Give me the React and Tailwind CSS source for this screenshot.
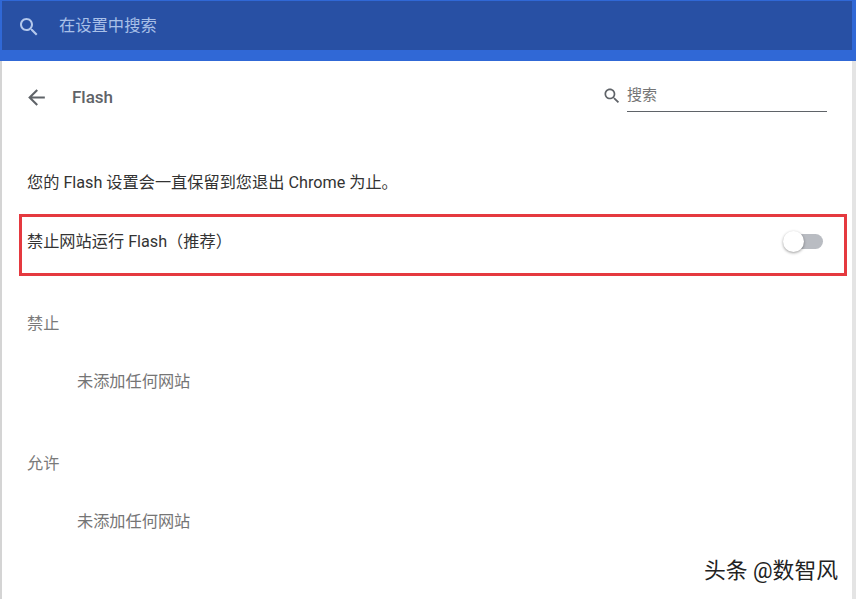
import React from "react";

const font = { fontFamily: '"Roboto", "Noto Sans CJK SC", sans-serif' };

const SearchIcon = ({ className }) => (
  <svg viewBox="0 0 24 24" fill="currentColor" className={className}>
    <path d="M15.5 14h-.79l-.28-.27C15.41 12.59 16 11.11 16 9.5 16 5.91 13.09 3 9.5 3S3 5.91 3 9.5 5.91 16 9.5 16c1.61 0 3.09-.59 4.23-1.57l.27.28v.79l5 4.99L20.49 19l-4.99-5zm-6 0C7.01 14 5 11.99 5 9.5S7.01 5 9.5 5 14 7.01 14 9.5 11.99 14 9.5 14z" />
  </svg>
);

const BackIcon = ({ className }) => (
  <svg viewBox="0 0 24 24" fill="currentColor" className={className}>
    <path d="M20 11H7.83l5.59-5.59L12 4l-8 8 8 8 1.41-1.41L7.83 13H20v-2z" />
  </svg>
);

const EmptySection = ({ title }) => (
  <div>
    <div className="pl-[27px] pt-[2px] h-[28px] flex items-center text-[16.2px] text-[#7a7a7a]">{title}</div>
    <div className="pl-[77px] pt-[2px] mt-[30px] h-[28px] flex items-center text-[16.2px] text-[#757575]">未添加任何网站</div>
  </div>
);

const App = () => {
  return (
    <div className="w-[856px] h-[599px] overflow-hidden bg-white flex flex-col" style={font}>
      <header className="h-[61px] shrink-0 bg-[#3068d6] pl-[2px] pr-[4px] pt-[1px]">
        <div className="h-[49px] pt-[2px] bg-[#2850a4] flex items-center">
          <SearchIcon className="ml-[15px] w-[24px] h-[24px] text-[#b4c8ec]" />
          <span className="ml-[18px] text-[16.3px] text-[#a9c0e8]">在设置中搜索</span>
        </div>
      </header>

      <main className="flex-1 flex bg-white">
        <div className="w-[2px] bg-[#d4d4d4]" />
        <div className="flex-1">
          <div className="h-[72px] flex items-center">
            <BackIcon className="ml-[22px] w-[25px] h-[25px] text-[#5f6368]" />
            <span className="ml-[23px] pt-[2px] text-[17px] font-medium text-[#5f6368]">Flash</span>
            <div className="ml-auto mr-[25px] flex items-start">
              <SearchIcon className="mt-[4px] w-[20px] h-[20px] text-[#5f6368]" />
              <div className="ml-[5px] w-[200px] h-[30px] pt-[1px] border-b border-[#5f6368] text-[15px] leading-[24px] text-[#757575]">搜索</div>
            </div>
          </div>

          <p className="mt-[37px] pl-[25px] pt-[2px] h-[24px] flex items-center text-[16.2px] text-[#333333] whitespace-pre">
            您的 Flash 设置会一直保留到您退出 Chrome 为止。
          </p>

          <div className="mt-[20px] ml-[17px] w-[828px] h-[62px] border-[3px] border-[#e5393f] flex items-center justify-between pl-[5px] pr-[21px] pb-[8px]">
            <span className="pt-[2px] text-[16.2px] text-[#333333]">禁止网站运行 Flash（推荐）</span>
            <div className="relative w-[33px] h-[15px] rounded-full bg-[#b9bcc2]">
              <div className="absolute -left-[7px] -top-[3px] w-[21px] h-[21px] rounded-full bg-white shadow-[0_1px_3px_rgba(0,0,0,0.4)]" />
            </div>
          </div>

          <div className="mt-[33px] -ml-[2px]">
            <EmptySection title="禁止" />
          </div>
          <div className="mt-[54px] -ml-[2px]">
            <EmptySection title="允许" />
          </div>

          <div className="mt-[22px] pr-[14px] text-right text-[21.8px] leading-[28px] text-[#222222]">头条 @数智风</div>
        </div>
        <div className="w-[4px] bg-[#e4e4e4]" />
      </main>
    </div>
  );
};

export default App;
